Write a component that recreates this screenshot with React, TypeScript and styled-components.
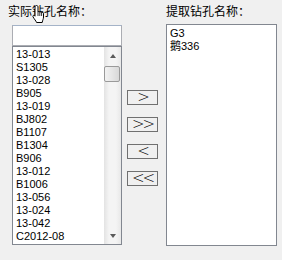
import { createGlobalStyle } from 'styled-components'
import styled from 'styled-components'

const GlobalStyle = createGlobalStyle`
  body {
    margin: 0;
    background: #f0f0f0;
  }
`

const Page = styled.div`
  position: relative;
  width: 282px;
  height: 260px;
  background: #f0f0f0;
  display: flex;
  align-items: flex-start;
  overflow: hidden;
`

const SourceColumn = styled.div`
  display: flex;
  flex-direction: column;
  width: 114px;
  margin: 4px 0 0 8px;
`

const TargetColumn = styled.div`
  display: flex;
  flex-direction: column;
  margin: 4px 0 0 8px;
`

const Label = styled.div`
  font: 12px/14px 'Noto Sans CJK SC', sans-serif;
  color: #000;
  white-space: nowrap;
`

const FilterInput = styled.input`
  box-sizing: border-box;
  width: 110px;
  height: 21px;
  margin: 7px 0 0 4px;
  padding: 0 2px;
  border: 1px solid #abadb3;
  border-top-color: #a4b3c8;
  background: #fff;
  outline: none;
`

const ListBox = styled.div<{ $width: number; $height: number; $top: number; $left: number }>`
  box-sizing: border-box;
  display: flex;
  width: ${({ $width }) => $width}px;
  height: ${({ $height }) => $height}px;
  margin: ${({ $top }) => $top}px 0 0 ${({ $left }) => $left}px;
  border: 1px solid #828790;
  background: #fff;
  overflow: hidden;
`

const Items = styled.div<{ $padTop: number }>`
  flex: 1;
  padding: ${({ $padTop }) => $padTop}px 0 0 3px;
`

const Item = styled.div`
  font: 11px/13px 'Liberation Sans', 'Noto Sans CJK SC', sans-serif;
  color: #000;
  white-space: nowrap;
`

const ScrollBar = styled.div`
  display: flex;
  flex-direction: column;
  width: 17px;
  background: linear-gradient(to right, #e3e3e3, #f4f4f4 30%, #f4f4f4 70%, #e8e8e8);
`

const ScrollArrow = styled.div`
  height: 17px;
  display: flex;
  align-items: center;
  justify-content: center;
`

const Triangle = styled.span<{ $down?: boolean }>`
  width: 0;
  height: 0;
  border-left: 3.5px solid transparent;
  border-right: 3.5px solid transparent;
  ${({ $down }) =>
    $down ? 'border-top: 4px solid #5a5a5a;' : 'border-bottom: 4px solid #5a5a5a;'}
`

const Thumb = styled.div`
  box-sizing: border-box;
  height: 16px;
  margin: 2px 1px 0 0;
  border: 1px solid #9a9a9a;
  border-radius: 2px;
  background: linear-gradient(to right, #f2f2f2, #e6e6e6 50%, #d8d8d8);
`

const Track = styled.div`
  flex: 1;
`

const ButtonColumn = styled.div`
  display: flex;
  flex-direction: column;
  gap: 12px;
  margin: 90px 0 0 5px;
`

const MoveButton = styled.button`
  box-sizing: border-box;
  width: 31px;
  height: 15px;
  padding: 0 0 1px;
  border: 1px solid #707070;
  background: #f0f0f0;
  color: #000;
  font: 200 15px/13px 'DejaVu Sans', sans-serif;
  letter-spacing: -2px;
  display: flex;
  align-items: center;
  justify-content: center;
`

const Cursor = styled.svg`
  position: absolute;
  left: 32px;
  top: 5px;
`

const sourceNames = [
  '13-013',
  'S1305',
  '13-028',
  'B905',
  '13-019',
  'BJ802',
  'B1107',
  'B1304',
  'B906',
  '13-012',
  'B1006',
  '13-056',
  '13-024',
  '13-042',
  'C2012-08',
]

const pickedNames = ['G3', '鹅336']

export default function App() {
  return (
    <Page>
      <GlobalStyle />
      <SourceColumn>
        <Label>实际钻孔名称：</Label>
        <FilterInput />
        <ListBox $width={110} $height={199} $top={0} $left={4}>
          <Items $padTop={1}>
            {sourceNames.map((n) => (
              <Item key={n}>{n}</Item>
            ))}
          </Items>
          <ScrollBar>
            <ScrollArrow>
              <Triangle />
            </ScrollArrow>
            <Thumb />
            <Track />
            <ScrollArrow>
              <Triangle $down />
            </ScrollArrow>
          </ScrollBar>
        </ListBox>
      </SourceColumn>
      <ButtonColumn>
        <MoveButton>&gt;</MoveButton>
        <MoveButton>&gt;&gt;</MoveButton>
        <MoveButton>&lt;</MoveButton>
        <MoveButton>&lt;&lt;</MoveButton>
      </ButtonColumn>
      <TargetColumn>
        <Label>提取钻孔名称：</Label>
        <ListBox $width={111} $height={222} $top={6} $left={0}>
          <Items $padTop={2}>
            {pickedNames.map((n) => (
              <Item key={n}>{n}</Item>
            ))}
          </Items>
        </ListBox>
      </TargetColumn>
      <Cursor width="14" height="18" viewBox="0 0 14 18">
        <path
          d="M4.5 0.5 C5.3 0.5 6 1 6 2 V7 C6.3 6.4 7.6 6.4 7.8 7.3 C8.2 6.7 9.4 6.8 9.6 7.7 C10 7.2 11.4 7.3 11.5 8.3 V12 C11.5 14 10.6 15 10.2 17.5 H4.6 C4.1 16 2.2 14 1.1 12 C0.5 10.9 1.3 9.9 2.4 10.5 L3 11.2 V2 C3 1 3.7 0.5 4.5 0.5 Z"
          fill="#fff"
          stroke="#000"
          strokeWidth="1"
        />
        <path d="M6 7 V11 M7.8 7.3 V11 M9.6 7.7 V11" stroke="#000" strokeWidth="0.8" fill="none" />
      </Cursor>
    </Page>
  )
}
